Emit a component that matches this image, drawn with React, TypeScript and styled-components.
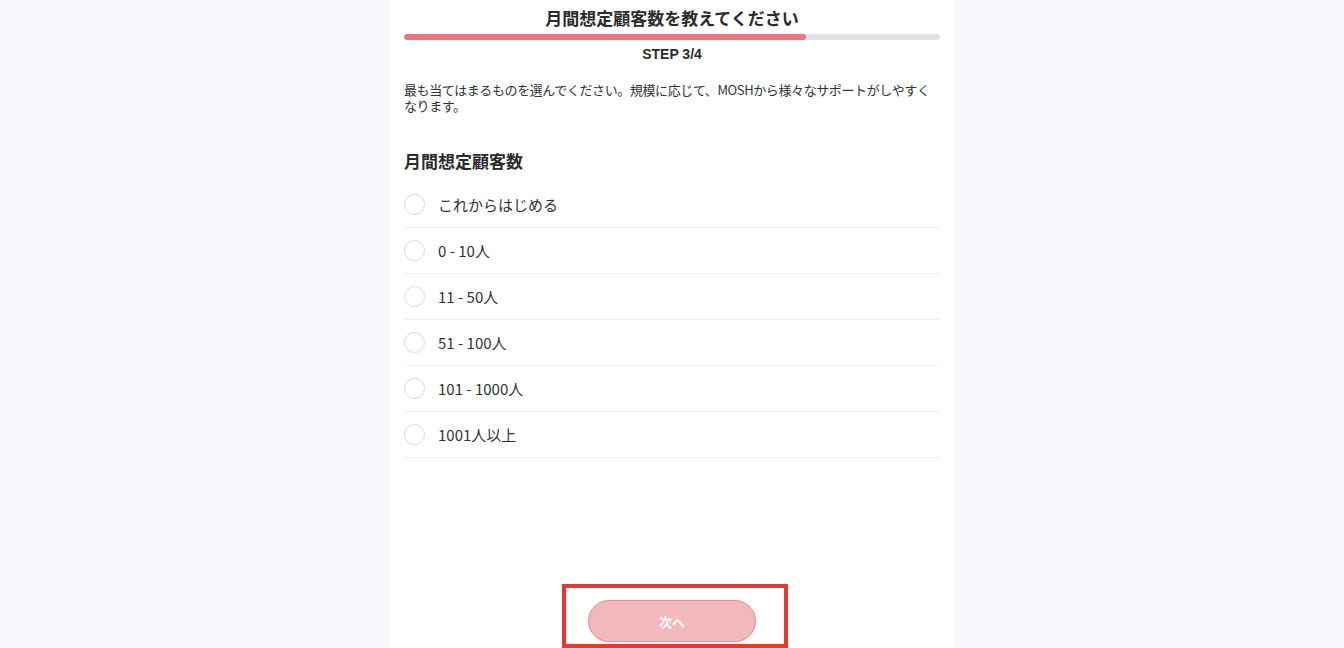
import React, { useState } from "react";
import styled, { createGlobalStyle } from "styled-components";

const GlobalStyle = createGlobalStyle`
    body {
        margin: 0;
        background: #f7f8fc;
        font-family: "Noto Sans CJK JP", "Noto Sans", sans-serif;
        color: #333333;
    }
`;

const Page = styled.div`
    width: 564px;
    min-height: 648px;
    margin: 0 auto;
    padding: 6px 14px 0;
    box-sizing: border-box;
    background: #ffffff;
    display: flex;
    flex-direction: column;
`;

const Title = styled.h1`
    margin: 0;
    font-size: 17px;
    line-height: 24px;
    font-weight: 700;
    text-align: center;
    color: #2b2b2b;
`;

const ProgressTrack = styled.div`
    margin-top: 4px;
    height: 6px;
    border-radius: 3px;
    background: #e1e1e8;
    overflow: hidden;
`;

const ProgressFill = styled.div`
    height: 100%;
    border-radius: 3px;
    background: #e9787d;
`;

const StepLabel = styled.div`
    margin-top: 6px;
    font-family: "Liberation Sans", "Noto Sans CJK JP", sans-serif;
    font-size: 14px;
    line-height: 16px;
    font-weight: 700;
    text-align: center;
    color: #2b2b2b;
`;

const Description = styled.p`
    margin: 20px 0 0;
    font-size: 13px;
    line-height: 16px;
    letter-spacing: -0.4px;
    color: #333333;
`;

const SectionTitle = styled.h2`
    margin: 35px 0 0;
    font-size: 17px;
    line-height: 24px;
    font-weight: 700;
    color: #2b2b2b;
`;

const OptionList = styled.div`
    margin-top: 9px;
    display: flex;
    flex-direction: column;
`;

const OptionRow = styled.label`
    display: flex;
    align-items: center;
    gap: 13px;
    height: 46px;
    border-bottom: 1px solid #ededf2;
    box-sizing: border-box;
    cursor: pointer;
`;

const Radio = styled.span<{ $checked: boolean }>`
    width: 21px;
    height: 21px;
    border-radius: 50%;
    border: 1px solid ${(p) => (p.$checked ? "#e9787d" : "#d9d9e1")};
    box-sizing: border-box;
    background: #ffffff;
    display: flex;
    align-items: center;
    justify-content: center;

    &::after {
        content: "";
        width: 11px;
        height: 11px;
        border-radius: 50%;
        background: ${(p) => (p.$checked ? "#e9787d" : "transparent")};
    }
`;

const OptionText = styled.span`
    font-size: 15px;
    line-height: 20px;
    color: #333333;
`;

const Footer = styled.div`
    margin-top: 126px;
    padding-left: 6px;
    display: flex;
    justify-content: center;
`;

const Highlight = styled.div`
    width: 226px;
    height: 64px;
    box-sizing: border-box;
    border: 4px solid #e5392f;
    padding: 12px 6px 0 0;
    display: flex;
    justify-content: center;
    align-items: flex-start;
`;

const NextButton = styled.button<{ $disabled: boolean }>`
    width: 168px;
    height: 42px;
    border-radius: 21px;
    border: 1px solid #e98a8e;
    background: ${(p) => (p.$disabled ? "#f1b9bc" : "#e9787d")};
    color: #ffffff;
    font-family: "Noto Sans CJK JP", sans-serif;
    font-size: 13px;
    font-weight: 700;
    cursor: pointer;
`;

const options = [
    "これからはじめる",
    "0 - 10人",
    "11 - 50人",
    "51 - 100人",
    "101 - 1000人",
    "1001人以上",
];

export default function App() {
    const [selected, setSelected] = useState<number | null>(null);

    return (
        <>
            <GlobalStyle />
            <Page>
                <Title>月間想定顧客数を教えてください</Title>
                <ProgressTrack>
                    <ProgressFill style={{ width: "75%" }} />
                </ProgressTrack>
                <StepLabel>STEP 3/4</StepLabel>
                <Description>
                    最も当てはまるものを選んでください。規模に応じて、MOSHから様々なサポートがしやすくなります。
                </Description>
                <SectionTitle>月間想定顧客数</SectionTitle>
                <OptionList>
                    {options.map((label, i) => (
                        <OptionRow key={label} onClick={() => setSelected(i)}>
                            <Radio $checked={selected === i} />
                            <OptionText>{label}</OptionText>
                        </OptionRow>
                    ))}
                </OptionList>
                <Footer>
                    <Highlight>
                        <NextButton $disabled={selected === null}>次へ</NextButton>
                    </Highlight>
                </Footer>
            </Page>
        </>
    );
}
